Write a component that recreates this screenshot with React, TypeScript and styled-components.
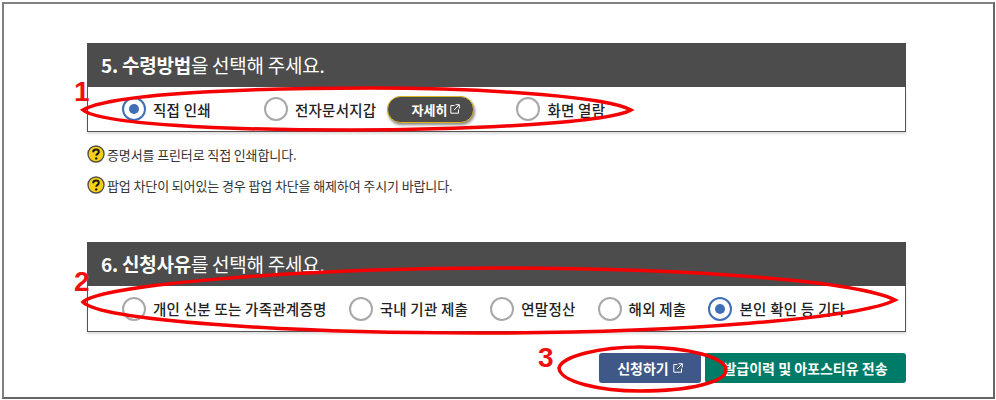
import React from 'react';
import styled, { createGlobalStyle } from 'styled-components';

const GlobalStyle = createGlobalStyle`
  html, body {
    margin: 0;
    padding: 0;
    background: #fff;
  }
  body {
    font-family: 'Noto Sans CJK KR', 'Noto Sans', sans-serif;
    color: #222;
  }
`;

const Frame = styled.div`
  position: relative;
  box-sizing: border-box;
  width: 993px;
  height: 397px;
  margin: 2px 0 0 2px;
  border: 2px solid #808080;
  border-bottom-color: #666;
  border-right-color: #666;
  padding: 39px 87px 0 83px;
  background: #fff;
`;

const Section = styled.section<{ $gapBelow: number }>`
  margin-bottom: ${p => p.$gapBelow}px;
`;

const SectionTitle = styled.h2`
  display: flex;
  align-items: center;
  height: 44px;
  margin: 0;
  padding: 0 0 2px 14px;
  box-sizing: border-box;
  background: #4c4c4c;
  color: #fff;
  font-size: 19px;
  font-weight: 400;
  letter-spacing: -0.25px;

  strong {
    font-weight: 700;
  }
`;

const OptionRow = styled.div<{ $height: number }>`
  display: flex;
  align-items: center;
  box-sizing: border-box;
  height: ${p => p.$height}px;
  padding-left: 34px;
  border: 1px solid #555;
  border-top: 0;
  box-shadow: 0 2px 2px #ddd;
`;

const Option = styled.label<{ $space?: number }>`
  display: flex;
  align-items: center;
  gap: 7px;
  margin-left: ${p => p.$space ?? 0}px;
  font-size: 14.5px;
  font-weight: 500;
  letter-spacing: 0.25px;
  color: #222;
  white-space: nowrap;
`;

const Radio = styled.span<{ $checked?: boolean }>`
  display: flex;
  align-items: center;
  justify-content: center;
  box-sizing: border-box;
  width: 24px;
  height: 24px;
  border-radius: 50%;
  border: 2px solid ${p => (p.$checked ? '#3f6fb5' : '#a8a8a8')};
  background: #fff;

  &::after {
    content: '';
    display: ${p => (p.$checked ? 'block' : 'none')};
    width: 10px;
    height: 10px;
    border-radius: 50%;
    background: #3f6fb5;
  }
`;

const DetailButton = styled.button`
  display: flex;
  align-items: center;
  justify-content: center;
  gap: 3px;
  box-sizing: border-box;
  width: 87px;
  height: 27px;
  margin-left: 11px;
  padding: 0 0 0 10px;
  border: 1px solid #d9b21c;
  border-radius: 14px;
  background: #4c4c4c;
  box-shadow: 1px 2px 3px #888;
  color: #fff;
  font-family: inherit;
  font-size: 13px;
  font-weight: 700;
`;

const Notes = styled.ul`
  display: flex;
  flex-direction: column;
  gap: 11px;
  margin: 12px 0 0;
  padding: 0;
  list-style: none;
`;

const Note = styled.li`
  display: flex;
  align-items: center;
  gap: 2px;
  height: 20px;
  font-size: 13px;
  letter-spacing: -0.12px;
  color: #333;
`;

const Actions = styled.div`
  display: flex;
  justify-content: flex-end;
  gap: 4px;
`;

const ActionButton = styled.button<{ $color: string; $width: number }>`
  display: flex;
  align-items: center;
  justify-content: center;
  gap: 4px;
  box-sizing: border-box;
  width: ${p => p.$width}px;
  height: 30px;
  padding: 0;
  border: 0;
  border-radius: 3px;
  background: ${p => p.$color};
  color: #fff;
  font-family: inherit;
  font-size: 14px;
  font-weight: 700;
  white-space: nowrap;
`;

const Overlay = styled.svg`
  position: absolute;
  top: -4px;
  left: -4px;
  width: 996px;
  height: 400px;
  pointer-events: none;
`;

const Marker = styled.span<{ $x: number; $y: number }>`
  position: absolute;
  left: ${p => p.$x - 4}px;
  top: ${p => p.$y - 4}px;
  color: #f01010;
  font-family: 'Liberation Sans', sans-serif;
  font-size: 28px;
  font-weight: 700;
  line-height: 28px;
`;

function ExternalIcon({ size = 10 }: { size?: number }) {
  return (
    <svg width={size} height={size} viewBox="0 0 10 10" fill="none" stroke="currentColor" strokeWidth="1">
      <path d="M4.5 1.5H.8v7.7h7.7V5.5" />
      <path d="M5.5.7h3.8v3.8M9.2.8 4 6" />
    </svg>
  );
}

function HelpIcon() {
  return (
    <svg width="18" height="18" viewBox="0 0 18 18">
      <circle cx="9" cy="9" r="8" fill="#f7d117" stroke="#55504a" strokeWidth="1.4" />
      <path
        d="M6.2 7.2c0-1.7 1.2-2.6 2.8-2.6s2.8.9 2.8 2.3c0 1.9-2.5 2-2.5 3.8"
        fill="none"
        stroke="#1a1a1a"
        strokeWidth="2"
      />
      <circle cx="9.2" cy="13.4" r="1.2" fill="#1a1a1a" />
    </svg>
  );
}

const receiveOptions = [
  { label: '직접 인쇄', checked: true, space: 0 },
  { label: '전자문서지갑', checked: false, space: 53 },
];

const reasonOptions = [
  { label: '개인 신분 또는 가족관계증명', checked: false },
  { label: '국내 기관 제출', checked: false },
  { label: '연말정산', checked: false },
  { label: '해외 제출', checked: false },
  { label: '본인 확인 등 기타', checked: true },
];

export default function App() {
  return (
    <>
      <GlobalStyle />
      <Frame>
        <Section $gapBelow={47}>
          <SectionTitle>
            <span>
              <strong>5. 수령방법</strong>을 선택해 주세요.
            </span>
          </SectionTitle>
          <OptionRow $height={45}>
            {receiveOptions.map(o => (
              <Option key={o.label} $space={o.space}>
                <Radio $checked={o.checked} />
                {o.label}
              </Option>
            ))}
            <DetailButton>
              자세히 <ExternalIcon />
            </DetailButton>
            <Option $space={42}>
              <Radio />
              화면 열람
            </Option>
          </OptionRow>
          <Notes>
            <Note>
              <HelpIcon />
              증명서를 프린터로 직접 인쇄합니다.
            </Note>
            <Note>
              <HelpIcon />
              팝업 차단이 되어있는 경우 팝업 차단을 해제하여 주시기 바랍니다.
            </Note>
          </Notes>
        </Section>
        <Section $gapBelow={21}>
          <SectionTitle>
            <span>
              <strong>6. 신청사유</strong>를 선택해 주세요.
            </span>
          </SectionTitle>
          <OptionRow $height={46}>
            {reasonOptions.map((o, i) => (
              <Option key={o.label} $space={i === 0 ? 0 : 22}>
                <Radio $checked={o.checked} />
                {o.label}
              </Option>
            ))}
          </OptionRow>
        </Section>
        <Actions>
          <ActionButton $color="#3f5888" $width={102}>
            신청하기 <ExternalIcon />
          </ActionButton>
          <ActionButton $color="#007b68" $width={201}>
            발급이력 및 아포스티유 전송
          </ActionButton>
        </Actions>

        <Overlay viewBox="0 0 996 400" fill="none" stroke="#f40000" strokeWidth="3.5">
          <path d="M83 110C110 94 240 88 370 88C500 88 610 98 631 110C610 122 480 130 350 130C220 130 100 124 83 110Z" />
          <path d="M83 302C100 285 300 268 500 268C700 268 860 282 895 300C860 318 680 333 480 333C280 333 100 320 83 302Z" />
          <path d="M559 368C562 356 600 347 640 347C690 347 726 358 726 370C726 382 690 391 640 391C600 391 560 382 559 368Z" />
        </Overlay>
        <Marker $x={74} $y={78}>1</Marker>
        <Marker $x={74} $y={268}>2</Marker>
        <Marker $x={538} $y={344}>3</Marker>
      </Frame>
    </>
  );
}
